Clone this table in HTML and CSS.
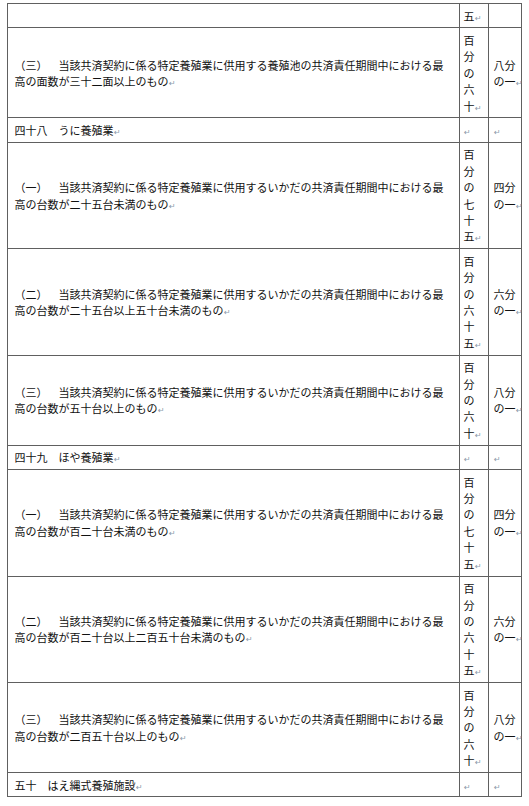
FILE: index.html
```html
<!DOCTYPE html>
<html lang="ja">
<head>
<meta charset="utf-8">
<title>表</title>
<link rel="stylesheet" href="styles.css">
</head>
<body>
<table class="tbl">
<colgroup><col class="c1"><col class="c2"><col class="c3"></colgroup>
<tr>
<td class="item"></td>
<td class="rate"><span class="nw">五<span class="pm">↵</span></span></td>
<td class="frac"></td>
</tr>
<tr>
<td class="item">（三）　当該共済契約に係る特定養殖業に供用する養殖池の共済責任期間中における最高の面数が三十二面以上のもの<span class="pm">↵</span></td>
<td class="rate">百分の六<span class="nw">十<span class="pm">↵</span></span></td>
<td class="frac">八分<span class="nw">の一<span class="pm">↵</span></span></td>
</tr>
<tr>
<td class="item">四十八　うに養殖業<span class="pm">↵</span></td>
<td class="rate"><span class="pm">↵</span></td>
<td class="frac"><span class="pm">↵</span></td>
</tr>
<tr>
<td class="item">（一）　当該共済契約に係る特定養殖業に供用するいかだの共済責任期間中における最高の台数が二十五台未満のもの<span class="pm">↵</span></td>
<td class="rate">百分の七十<span class="nw">五<span class="pm">↵</span></span></td>
<td class="frac">四分<span class="nw">の一<span class="pm">↵</span></span></td>
</tr>
<tr>
<td class="item">（二）　当該共済契約に係る特定養殖業に供用するいかだの共済責任期間中における最高の台数が二十五台以上五十台未満のもの<span class="pm">↵</span></td>
<td class="rate">百分の六十<span class="nw">五<span class="pm">↵</span></span></td>
<td class="frac">六分<span class="nw">の一<span class="pm">↵</span></span></td>
</tr>
<tr>
<td class="item">（三）　当該共済契約に係る特定養殖業に供用するいかだの共済責任期間中における最高の台数が五十台以上のもの<span class="pm">↵</span></td>
<td class="rate">百分の六<span class="nw">十<span class="pm">↵</span></span></td>
<td class="frac">八分<span class="nw">の一<span class="pm">↵</span></span></td>
</tr>
<tr>
<td class="item">四十九　ほや養殖業<span class="pm">↵</span></td>
<td class="rate"><span class="pm">↵</span></td>
<td class="frac"><span class="pm">↵</span></td>
</tr>
<tr>
<td class="item">（一）　当該共済契約に係る特定養殖業に供用するいかだの共済責任期間中における最高の台数が百二十台未満のもの<span class="pm">↵</span></td>
<td class="rate">百分の七十<span class="nw">五<span class="pm">↵</span></span></td>
<td class="frac">四分<span class="nw">の一<span class="pm">↵</span></span></td>
</tr>
<tr>
<td class="item">（二）　当該共済契約に係る特定養殖業に供用するいかだの共済責任期間中における最高の台数が百二十台以上二百五十台未満のもの<span class="pm">↵</span></td>
<td class="rate">百分の六十<span class="nw">五<span class="pm">↵</span></span></td>
<td class="frac">六分<span class="nw">の一<span class="pm">↵</span></span></td>
</tr>
<tr>
<td class="item">（三）　当該共済契約に係る特定養殖業に供用するいかだの共済責任期間中における最高の台数が二百五十台以上のもの<span class="pm">↵</span></td>
<td class="rate">百分の六<span class="nw">十<span class="pm">↵</span></span></td>
<td class="frac">八分<span class="nw">の一<span class="pm">↵</span></span></td>
</tr>
<tr>
<td class="item">五十　はえ縄式養殖施設<span class="pm">↵</span></td>
<td class="rate"><span class="pm">↵</span></td>
<td class="frac"><span class="pm">↵</span></td>
</tr>
</table>
</body>
</html>
```
FILE: styles.css
```css
html, body {
  margin: 0;
  padding: 0;
  background: #ffffff;
}
body {
  padding: 3px 0 0 7px;
  font-family: "Noto Sans CJK JP", "Noto Sans", sans-serif;
  font-size: 11px;
  line-height: 16.4px;
  color: #111111;
  text-spacing-trim: space-all;
}
.tbl {
  border-collapse: collapse;
  table-layout: fixed;
  width: 514px;
}
.c1 { width: 452px; }
.c2 { width: 29px; }
.c3 { width: 33px; }
.tbl td {
  border: 1px solid #606060;
  padding: 3.5px 0;
  vertical-align: middle;
  overflow: visible;
}
.item {
  padding-left: 6.5px !important;
  padding-right: 10px !important;
}
.rate {
  padding-left: 3.5px !important;
  padding-right: 5px !important;
}
.frac {
  padding-left: 4.5px !important;
  padding-right: 4px !important;
}
.nw {
  white-space: nowrap;
}
.pm {
  font-family: "DejaVu Sans", sans-serif;
  font-size: 8px;
  line-height: 0;
  color: #8a98aa;
  margin-left: 0.5px;
}
```
